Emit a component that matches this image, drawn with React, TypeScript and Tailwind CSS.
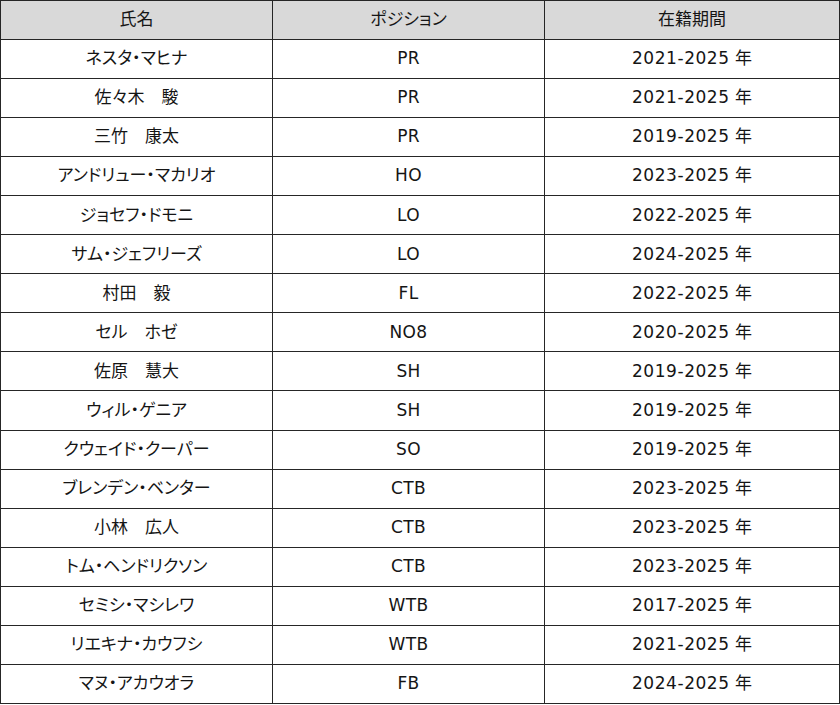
const players = [
  ["ネスタ・マヒナ", "PR", "2021-2025"],
  ["佐々木　駿", "PR", "2021-2025"],
  ["三竹　康太", "PR", "2019-2025"],
  ["アンドリュー・マカリオ", "HO", "2023-2025"],
  ["ジョセフ・ドモニ", "LO", "2022-2025"],
  ["サム・ジェフリーズ", "LO", "2024-2025"],
  ["村田　毅", "FL", "2022-2025"],
  ["セル　ホゼ", "NO8", "2020-2025"],
  ["佐原　慧大", "SH", "2019-2025"],
  ["ウィル・ゲニア", "SH", "2019-2025"],
  ["クウェイド・クーパー", "SO", "2019-2025"],
  ["ブレンデン・ベンター", "CTB", "2023-2025"],
  ["小林　広人", "CTB", "2023-2025"],
  ["トム・ヘンドリクソン", "CTB", "2023-2025"],
  ["セミシ・マシレワ", "WTB", "2017-2025"],
  ["リエキナ・カウフシ", "WTB", "2021-2025"],
  ["マヌ・アカウオラ", "FB", "2024-2025"],
];

const cell = "h-[39.06px] p-0 border-[1.5px] border-[#262626] text-center align-middle";

export default function App() {
  return (
    <div className="w-[840px] h-[705px] bg-white font-['DejaVu_Sans','Noto_Sans_CJK_JP',sans-serif] text-[17px] text-[#151515] [font-feature-settings:'palt']">
      <table className="w-[839px] border-collapse table-fixed">
        <colgroup>
          <col className="w-[272px]" />
          <col className="w-[272px]" />
          <col className="w-[295px]" />
        </colgroup>
        <thead>
          <tr className="bg-[#d9d9d9]">
            <th className={`${cell} font-normal`}>氏名</th>
            <th className={`${cell} font-normal`}>ポジション</th>
            <th className={`${cell} font-normal`}>在籍期間</th>
          </tr>
        </thead>
        <tbody>
          {players.map(([name, pos, years]) => (
            <tr key={name}>
              <td className={cell}>{name}</td>
              <td className={`${cell} tracking-[0.3px]`}>{pos}</td>
              <td className={cell}>
                <span className="tracking-[0.55px]">{years}</span> 年
              </td>
            </tr>
          ))}
        </tbody>
      </table>
    </div>
  );
}
